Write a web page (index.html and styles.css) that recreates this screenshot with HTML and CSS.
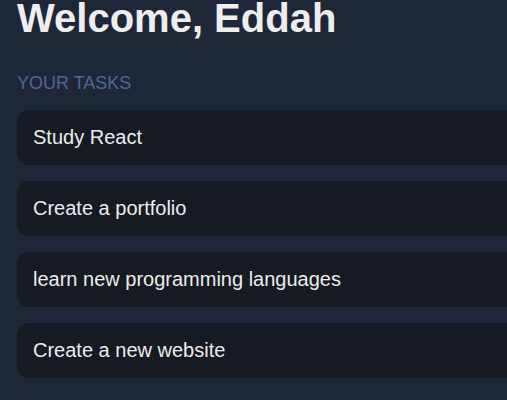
FILE: index.html
```html
<!DOCTYPE html>
<html lang="en">
<head>
<meta charset="utf-8">
<title>Tasks</title>
<link rel="stylesheet" href="styles.css">
</head>
<body>
<main class="page">
  <h1 class="title">Welcome, Eddah</h1>
  <h2 class="section-label">YOUR TASKS</h2>
  <ul class="task-list">
    <li class="task">Study React</li>
    <li class="task">Create a portfolio</li>
    <li class="task">learn new programming languages</li>
    <li class="task">Create a new website</li>
  </ul>
</main>
</body>
</html>
```

FILE: styles.css
```css
html, body {
  margin: 0;
  padding: 0;
  background: #1e2738;
  overflow: hidden;
}

body {
  font-family: "Liberation Sans", Arial, Helvetica, sans-serif;
  color: #ececec;
}

.page {
  padding: 0 0 0 17px;
  width: 620px;
}

.title {
  margin: -2px 0 0;
  font-size: 40px;
  line-height: 40px;
  font-weight: bold;
  color: #eeeeee;
}

.section-label {
  margin: 36px 0 18px;
  font-size: 18px;
  line-height: 18px;
  font-weight: normal;
  color: #4f6792;
}

.task-list {
  list-style: none;
  margin: 0;
  padding: 0;
  display: flex;
  flex-direction: column;
  gap: 16px;
}

.task {
  background: #151a23;
  border-radius: 12px;
  padding: 16px;
  font-size: 20px;
  line-height: 23px;
  color: #ececec;
}
```
